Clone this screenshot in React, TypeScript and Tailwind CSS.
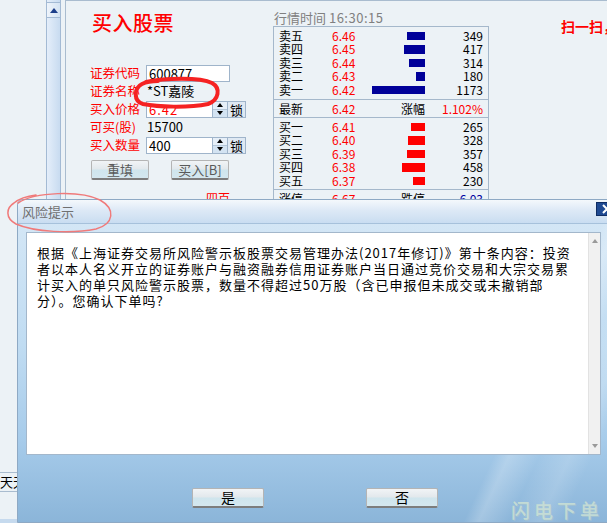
import React from "react";

type Level = { label: string; price: string; vol: number };

const sellLevels: Level[] = [
  { label: "卖五", price: "6.46", vol: 349 },
  { label: "卖四", price: "6.45", vol: 417 },
  { label: "卖三", price: "6.44", vol: 314 },
  { label: "卖二", price: "6.43", vol: 180 },
  { label: "卖一", price: "6.42", vol: 1173 },
];

const buyLevels: Level[] = [
  { label: "买一", price: "6.41", vol: 265 },
  { label: "买二", price: "6.40", vol: 328 },
  { label: "买三", price: "6.39", vol: 357 },
  { label: "买四", price: "6.38", vol: 458 },
  { label: "买五", price: "6.37", vol: 230 },
];

const maxVol = 1173;

const QuoteRow = ({ level, barClass }: { level: Level; barClass: string }) => (
  <div className="grid grid-cols-[53px_40px_53px_58px] h-[13.5px] items-center leading-none">
    <span>{level.label}</span>
    <span className="text-[#ff0000]">{level.price}</span>
    <span className="flex justify-end">
      <span
        className={`h-[8.5px] ${barClass}`}
        style={{ width: Math.round((level.vol / maxVol) * 60) }}
      />
    </span>
    <span className="text-right">{level.vol}</span>
  </div>
);

const Spinner = () => (
  <div className="flex flex-col w-[15px] h-[17px] border border-[#9fb4ca] border-l-0">
    <div className="flex-1 flex items-center justify-center bg-[#e6eff8] border-b border-[#b5c7d9]">
      <span className="w-0 h-0 border-x-[3px] border-x-transparent border-b-[4px] border-b-black" />
    </div>
    <div className="flex-1 flex items-center justify-center bg-[#d3e3f2]">
      <span className="w-0 h-0 border-x-[3px] border-x-transparent border-t-[4px] border-t-black" />
    </div>
  </div>
);

const LockBtn = () => (
  <div className="w-[18px] h-[17px] border border-l-0 border-[#9fb4ca] bg-[#dfe9f3] text-[13px] leading-[15px] text-center text-black">
    锁
  </div>
);

const FormRow = ({ label, children }: { label: string; children: React.ReactNode }) => (
  <div className="flex items-center h-[18px]">
    <span className="w-[56px] shrink-0 text-[12.5px] text-[#ff0000] whitespace-nowrap">{label}</span>
    {children}
  </div>
);

const GlossButton = ({ label, w, text }: { label: string; w: string; text: string }) => (
  <div
    className={`${w} h-[20px] rounded-[2px] border border-[#b4b4b4] border-b-2 border-b-[#7d7d7d] bg-[linear-gradient(180deg,#f1f4f6_0%,#e2e8ec_48%,#cfe5ed_52%,#d4e7ef_100%)] flex items-center justify-center ${text}`}
  >
    {label}
  </div>
);

const noticeLines = [
  "根据《上海证券交易所风险警示板股票交易管理办法(2017年修订)》第十条内容：投资",
  "者以本人名义开立的证券账户与融资融券信用证券账户当日通过竞价交易和大宗交易累",
  "计买入的单只风险警示股票，数量不得超过50万股（含已申报但未成交或未撤销部",
  "分）。您确认下单吗?",
];

export default function App() {
  return (
    <div className="relative w-[607px] h-[523px] overflow-hidden bg-[#ecf2f6] flex font-['Noto_Sans_CJK_SC','Noto_Sans',sans-serif] text-black">
      {/* left list panel */}
      <div className="w-[46px] shrink-0 flex flex-col">
        <div className="flex-1" />
        <div className="h-[20px] border-y border-[#a9bccf] text-[13px] leading-[18px] whitespace-nowrap overflow-hidden">
          天天基金
        </div>
        <div className="h-[27px]" />
        <div className="h-[4px] bg-[#c6daee]" />
      </div>

      {/* scrollbar */}
      <div className="w-[15px] shrink-0 h-full border-x border-[#a3bad4] bg-[linear-gradient(90deg,#e4eefa,#c8dbf0)]">
        <div className="h-[16px] mt-[2px] border-y border-[#a3bad4] bg-[linear-gradient(90deg,#eef4fb,#d4e3f3)] flex items-center justify-center">
          <span className="w-0 h-0 border-x-[4px] border-x-transparent border-b-[5px] border-b-[#1d3f8a]" />
        </div>
      </div>
      <div className="w-[4px] shrink-0" />

      {/* main panel */}
      <div className="flex-1 min-w-0 flex border-l border-t border-[#a9bccf] pl-[24px]">
        {/* order form */}
        <div className="w-[183px] shrink-0 flex flex-col">
          <div className="mt-[10px] pl-[2px] text-[20px] leading-[24px] font-medium text-[#ff0000] tracking-[0.5px]">
            买入股票
          </div>
          <div className="mt-[29px] flex flex-col text-[13px]">
            <FormRow label="证券代码">
              <div className="w-[84px] h-[17px] bg-white border border-[#9fb4ca] pl-[2px] leading-[15px]">600877</div>
            </FormRow>
            <FormRow label="证券名称">
              <span className="pl-[1px]">*ST嘉陵</span>
            </FormRow>
            <FormRow label="买入价格">
              <div className="w-[67px] h-[17px] bg-white border border-[#9fb4ca] pl-[2px] leading-[15px] text-[#ff0000] tracking-[1px]">6.42</div>
              <Spinner />
              <LockBtn />
            </FormRow>
            <FormRow label="可买(股)">
              <span className="pl-[1px]">15700</span>
            </FormRow>
            <FormRow label="买入数量">
              <div className="w-[67px] h-[17px] bg-white border border-[#9fb4ca] pl-[2px] leading-[15px]">400</div>
              <Spinner />
              <LockBtn />
            </FormRow>
          </div>
          <div className="mt-[6px] pl-[1px] flex gap-[22px] text-[13px]">
            <GlossButton label="重填" w="w-[58px]" text="text-[#5a5a5a]" />
            <GlossButton label="买入[B]" w="w-[58px]" text="text-[#5a5a5a]" />
          </div>
          <div className="mt-[11px] pl-[116px] text-[12px] leading-[14px] text-[#ff0000]">四百</div>
        </div>

        {/* quote panel */}
        <div className="w-[216px] shrink-0 pt-[9px] flex flex-col">
          <div className="pl-[1px] h-[16px] text-[13px] leading-[16px] text-[#808080] whitespace-nowrap">
            行情时间 <span className="tracking-[0.5px]">16:30:15</span>
          </div>
          <div className="border border-[#a5b8cb] text-[12px]">
            <div className="pl-[5px] pt-[2px] pb-[2.5px] border-b border-[#a5b8cb]">
              {sellLevels.map((l) => (
                <QuoteRow key={l.label} level={l} barClass="bg-[#000099]" />
              ))}
            </div>
            <div className="pl-[5px] h-[18px] grid grid-cols-[53px_40px_53px_58px] items-center border-b border-[#a5b8cb]">
              <span>最新</span>
              <span className="text-[#ff0000]">6.42</span>
              <span className="text-right">涨幅</span>
              <span className="text-right text-[#ff0000]">1.102%</span>
            </div>
            <div className="pl-[5px] pt-[2px] pb-[1.5px] border-b border-[#a5b8cb]">
              {buyLevels.map((l) => (
                <QuoteRow key={l.label} level={l} barClass="bg-[#ff0000]" />
              ))}
            </div>
            <div className="pl-[5px] h-[18px] grid grid-cols-[53px_40px_53px_58px] items-center">
              <span>涨停</span>
              <span className="text-[#ff0000]">6.67</span>
              <span className="text-right">跌停</span>
              <span className="text-right text-[#0000a0]">6.03</span>
            </div>
          </div>
        </div>

        <div className="pl-[72px] pt-[17px] text-[14px] leading-[16px] font-bold text-[#ff0000] whitespace-nowrap">
          扫一扫，
        </div>
      </div>

      {/* risk dialog */}
      <div className="absolute left-[17px] top-[199px] w-[615px] bottom-0 border border-[#8ea9c4] rounded-tl-[6px] flex flex-col bg-[linear-gradient(115deg,transparent_78%,rgba(255,255,255,0.22)_80%,transparent_84%,rgba(255,255,255,0.15)_88%,transparent_91%),linear-gradient(180deg,#d7e8f6_0%,#c0dcf2_45%,#a6cbea_75%,#8bb5d9_100%)]">
        <div className="h-[24px] rounded-tl-[6px] border-b border-[#a6c1db] bg-[linear-gradient(180deg,#f4f8fc_0%,#dde9f6_45%,#c9ddf1_100%)] pl-[4px] text-[13px] leading-[24px] text-[#707070]">
          风险提示
        </div>
        <div className="absolute top-[2px] right-[13px] w-[22px] h-[14px] bg-[#1f4a92] border border-[#0e2c63] flex items-center justify-center">
          <svg width="10" height="10" viewBox="0 0 10 10">
            <path d="M1 1 L9 9 M9 1 L1 9" stroke="#ffffff" strokeWidth="2" />
          </svg>
        </div>

        <div className="ml-[8px] mt-[8px] w-[575px] h-[223px] bg-white border border-[#a3b7cb] flex">
          <div className="flex-1 pl-[10px] pt-[12px] text-[13px] leading-[16px] tracking-[1px]">
            {noticeLines.map((line) => (
              <div key={line} className="whitespace-nowrap">
                {line}
              </div>
            ))}
          </div>
          <div className="w-[12px] bg-[#f1f1f1] border-l border-[#e2e2e2] flex flex-col items-center justify-between py-[6px]">
            <span className="w-0 h-0 border-x-[3px] border-x-transparent border-b-[4px] border-b-[#9a9a9a]" />
            <span className="w-0 h-0 border-x-[3px] border-x-transparent border-t-[4px] border-t-[#9a9a9a]" />
          </div>
        </div>

        <div className="mt-[33px] ml-[174px] flex gap-[102px] text-[14px]">
          <GlossButton label="是" w="w-[72px]" text="text-black" />
          <GlossButton label="否" w="w-[72px]" text="text-black" />
        </div>

        <div className="absolute left-[493px] top-[299px] text-[19px] leading-[22px] tracking-[4px] font-medium text-[#cfe3d4] opacity-80 [text-shadow:1px_1px_0_#a8c4cf]">
          闪电下单
        </div>
      </div>

      {/* hand-drawn annotations */}
      <svg className="absolute inset-0 pointer-events-none" width="607" height="523" viewBox="0 0 607 523">
        <path
          d="M146 82 C165 78 200 77 212 83 C221 88 219 100 208 104 C188 108 158 107 143 104 C133 101 134 88 142 84 C146 82 152 81 158 81"
          fill="none"
          stroke="#f52222"
          strokeWidth="4"
          strokeLinecap="round"
        />
        <path
          d="M18 203 C35 192 80 190 100 200 C116 209 114 224 96 229 C72 234 34 232 16 224 C5 218 6 208 14 203 C20 198 28 196 36 195"
          fill="none"
          stroke="#f07a7a"
          strokeWidth="1.5"
          strokeLinecap="round"
        />
      </svg>
    </div>
  );
}
